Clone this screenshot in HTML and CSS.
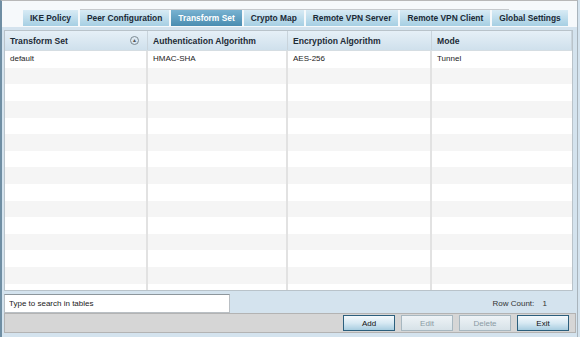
FILE: index.html
```html
<!DOCTYPE html>
<html lang="en">
<head>
  <meta charset="UTF-8" />
  <title>VPN - Transform Set</title>
  <link rel="stylesheet" href="styles.css">
</head>
<body>
  <div class="frame">
    <div class="tabbar">
      <div class="tabline"></div>
      <nav class="tabs">
        <span class="tab">IKE Policy</span>
        <span class="tab">Peer Configuration</span>
        <span class="tab active">Transform Set</span>
        <span class="tab">Crypto Map</span>
        <span class="tab">Remote VPN Server</span>
        <span class="tab">Remote VPN Client</span>
        <span class="tab">Global Settings</span>
      </nav>
    </div>

    <div class="content">
      <div class="grid">
        <div class="row head">
          <div class="cell">Transform Set <span class="sort">&#9650;</span></div>
          <div class="cell">Authentication Algorithm</div>
          <div class="cell">Encryption Algorithm</div>
          <div class="cell">Mode</div>
        </div>
        <div class="body" id="rows">
          <div class="row">
            <div class="cell">default</div>
            <div class="cell">HMAC-SHA</div>
            <div class="cell">AES-256</div>
            <div class="cell">Tunnel</div>
          </div>
        </div>
      </div>

      <div class="searchbar">
        <input class="search" type="text" placeholder="Type to search in tables" />
        <span class="count">Row Count: <b>1</b></span>
      </div>
    </div>

    <div class="actions">
      <button class="btn">Add</button>
      <button class="btn" disabled>Edit</button>
      <button class="btn" disabled>Delete</button>
      <button class="btn">Exit</button>
    </div>
  </div>

  <script>
    // fill the grid with empty striped rows
    const rows = document.getElementById('rows');
    for (let i = 0; i < 14; i++) {
      const r = document.createElement('div');
      r.className = 'row';
      for (let c = 0; c < 4; c++) {
        const cell = document.createElement('div');
        cell.className = 'cell';
        r.appendChild(cell);
      }
      rows.appendChild(r);
    }
  </script>
</body>
</html>
```

FILE: styles.css
```css
* {
  box-sizing: border-box;
}
html, body {
  margin: 0;
  padding: 0;
  height: 100%;
  font-family: "Liberation Sans", Arial, sans-serif;
  font-size: 8px;
  color: #222;
  background: #d4e3ee;
  overflow: hidden;
}
.frame {
  height: 337px;
  width: 578px;
  border-left: 2px solid #6f8ea3;
  border-top: 1px solid #b8b8b8;
  border-right: 1px solid #a9b4bc;
  display: flex;
  flex-direction: column;
}
.tabbar {
  background: #f6f9fb;
  height: 28px;
}
.tabline {
  height: 9px;
  margin-left: 78px;
  width: 429px;
  border-bottom: 1px solid #c6c9cc;
}
.tabs {
  display: flex;
  gap: 2px;
  padding-left: 21px;
}
.tab {
  height: 16px;
  line-height: 16px;
  padding: 0 7px;
  font-size: 8.4px;
  font-weight: bold;
  color: #1b2a36;
  background: linear-gradient(#d8ebf5, #a6cfe3);
  white-space: nowrap;
}
.tab.active {
  background: linear-gradient(#78b2d1, #4a8db1);
  color: #fff;
}
.content {
  flex: 1;
  padding: 3px 4px 0 2px;
  display: flex;
  flex-direction: column;
}
.grid {
  background: #fff;
  border: 1px solid #b9c3ca;
  height: 261px;
  overflow: hidden;
}
.row {
  display: grid;
  grid-template-columns: 143px 140px 144px 1fr;
  height: 16.6px;
}
.body .row:nth-child(even) {
  background: #f5f5f5;
}
.row.head {
  height: 20px;
  background: linear-gradient(#e6f0f7, #cfe0ec);
  border-bottom: 1px solid #d5dde2;
}
.cell {
  padding: 0 5px;
  line-height: 16.6px;
  border-right: 2px solid #e2e2e2;
  white-space: nowrap;
  overflow: hidden;
}
.cell:last-child {
  border-right: none;
}
.head .cell {
  line-height: 20px;
  font-size: 8.6px;
  font-weight: bold;
  color: #1d2b36;
  border-right: 1px solid #c9d4dc;
  display: flex;
  justify-content: space-between;
  align-items: center;
}
.sort {
  width: 9px;
  height: 9px;
  border: 1px solid #7d8a93;
  border-radius: 50%;
  font-size: 5px;
  line-height: 7px;
  text-align: center;
  color: #555;
  margin-right: 3px;
}
.searchbar {
  display: flex;
  align-items: center;
  justify-content: space-between;
  height: 22px;
  padding-top: 2px;
}
.search {
  width: 226px;
  height: 19px;
  border: 1px solid #b9bfc4;
  border-top-color: #8d969c;
  background: #fff;
  font-family: inherit;
  font-size: 8px;
  padding: 0 4px;
}
.search::placeholder {
  color: #222;
}
.count {
  margin-right: 26px;
  color: #333;
}
.count b {
  font-weight: normal;
  margin-left: 6px;
}
.actions {
  height: 21px;
  margin: 0 1px 4px 2px;
  background: #d6d6d6;
  border: 1px solid #b3b3b3;
  display: flex;
  justify-content: flex-end;
  align-items: center;
  gap: 6px;
  padding-right: 6px;
}
.btn {
  width: 52px;
  height: 16px;
  font-family: inherit;
  font-size: 8px;
  color: #111;
  border: 1px solid #2c5f7d;
  background: linear-gradient(#f4f9fc 0%, #d7e9f3 50%, #a8cde0 100%);
  padding: 0;
}
.btn:disabled {
  color: #8a9aa4;
  border-color: #a7b7c0;
  background: linear-gradient(#eef3f6, #d7e2e8);
}
```
